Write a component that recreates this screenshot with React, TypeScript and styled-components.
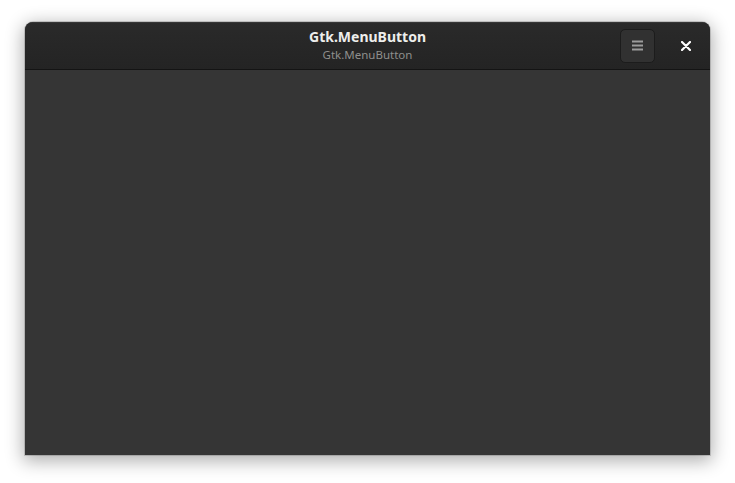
import styled, { createGlobalStyle } from 'styled-components';

const Global = createGlobalStyle`
  html, body {
    margin: 0;
    padding: 0;
    background: #ffffff;
  }
  body {
    font-family: "Noto Sans", "DejaVu Sans", sans-serif;
  }
`;

const Page = styled.div`
  width: 735px;
  height: 483px;
  padding: 22px 25px 0 25px;
  box-sizing: border-box;
`;

const Window = styled.div`
  width: 685px;
  height: 433px;
  display: flex;
  flex-direction: column;
  border-radius: 8px 8px 0 0;
  overflow: hidden;
  box-shadow: 0 4px 18px 2px rgba(0, 0, 0, 0.32), 0 0 0 1px rgba(0, 0, 0, 0.15);
  background: #353535;
`;

const HeaderBar = styled.header`
  height: 47px;
  flex-shrink: 0;
  display: grid;
  grid-template-columns: 1fr auto 1fr;
  align-items: center;
  padding: 0 7px;
  background: linear-gradient(#2a2a2a, #242424);
  border-bottom: 1px solid #141414;
  box-shadow: inset 0 1px rgba(255, 255, 255, 0.06);
`;

const TitleBox = styled.div`
  display: flex;
  flex-direction: column;
  align-items: center;
  line-height: 1;
`;

const Title = styled.div`
  color: #eeeeec;
  font-weight: 700;
  font-size: 14px;
`;

const Subtitle = styled.div`
  margin-top: 5px;
  color: #8f8f8d;
  font-size: 11.5px;
`;

const Actions = styled.div`
  display: flex;
  justify-content: flex-end;
  align-items: center;
  gap: 19px;
`;

const MenuButton = styled.button`
  width: 35px;
  height: 34px;
  border-radius: 5px;
  border: 1px solid #1c1c1c;
  background: #313131;
  display: flex;
  align-items: center;
  justify-content: center;
  padding: 0;
`;

const CloseButton = styled.button`
  width: 24px;
  height: 24px;
  border: none;
  background: transparent;
  display: flex;
  align-items: center;
  justify-content: center;
  padding: 0;
  margin-right: 5px;
`;

const Content = styled.main`
  flex: 1;
  background: #353535;
`;

export default function App() {
  return (
    <>
      <Global />
      <Page>
        <Window>
          <HeaderBar>
            <div />
            <TitleBox>
              <Title>Gtk.MenuButton</Title>
              <Subtitle>Gtk.MenuButton</Subtitle>
            </TitleBox>
            <Actions>
              <MenuButton>
                <svg width="11" height="11" viewBox="0 0 11 11">
                  <rect x="0" y="0.5" width="11" height="2" fill="#9c9c9c" />
                  <rect x="0" y="4.5" width="11" height="2" fill="#9c9c9c" />
                  <rect x="0" y="8.5" width="11" height="2" fill="#9c9c9c" />
                </svg>
              </MenuButton>
              <CloseButton>
                <svg width="10" height="10" viewBox="0 0 10 10">
                  <path d="M1 1 L9 9 M9 1 L1 9" stroke="#ffffff" strokeWidth="2.2" strokeLinecap="round" />
                </svg>
              </CloseButton>
            </Actions>
          </HeaderBar>
          <Content />
        </Window>
      </Page>
    </>
  );
}
